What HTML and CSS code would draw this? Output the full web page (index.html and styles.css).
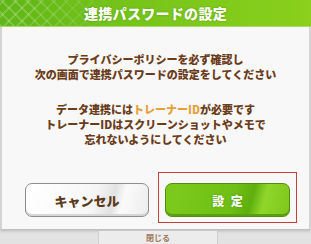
FILE: index.html
```html
<!DOCTYPE html>
<html lang="ja">
<head>
<meta charset="utf-8">
<link rel="stylesheet" href="styles.css">
</head>
<body>
<div class="screen">
  <div class="dialog">
    <div class="header"><span class="title">連携パスワードの設定</span></div>
    <div class="body">
      <p class="para">プライバシーポリシーを必ず確認し<br>次の画面で連携パスワードの設定をしてください</p>
      <p class="para second">データ連携には<span class="hl">トレーナーID</span>が必要です<br>トレーナーIDはスクリーンショットやメモで<br>忘れないようにしてください</p>
      <div class="buttons">
        <button class="btn cancel">キャンセル</button>
        <div class="ok-wrap">
          <button class="btn ok">設&nbsp;定</button>
          <span class="mark"></span>
        </div>
      </div>
    </div>
  </div>
  <div class="under">
    <div class="under-card">閉じる</div>
  </div>
</div>
</body>
</html>
```
FILE: styles.css
```css
html, body {
  margin: 0;
  padding: 0;
}
body {
  width: 311px;
  height: 244px;
  overflow: hidden;
  background: #e2e2e2;
  font-family: "Noto Sans CJK JP", "Noto Sans", sans-serif;
}
.screen {
  display: flex;
  flex-direction: column;
  height: 244px;
}
.dialog {
  display: flex;
  flex-direction: column;
  box-shadow: 0 2px 3px rgba(0,0,0,0.18);
}
.header {
  position: relative;
  height: 26px;
  display: flex;
  align-items: center;
  justify-content: center;
  background: linear-gradient(to right, #5fb616 0%, #76c41a 40%, #8ad01c 100%);
  border-bottom: 1px solid #a8d86a;
  overflow: hidden;
}
.header::before {
  content: "";
  position: absolute;
  left: 0;
  top: 0;
  width: 120px;
  height: 100%;
  background:
    repeating-linear-gradient(45deg, rgba(255,255,255,0.18) 0 2px, transparent 2px 9px),
    repeating-linear-gradient(-45deg, rgba(255,255,255,0.18) 0 2px, transparent 2px 9px);
  -webkit-mask-image: linear-gradient(to right, #000 20%, transparent 100%);
  mask-image: linear-gradient(to right, #000 20%, transparent 100%);
}
.title {
  position: relative;
  color: #ffffff;
  font-weight: 900;
  font-size: 14px;
  line-height: 18px;
  letter-spacing: 0.3px;
  text-shadow: 0 0 2px rgba(60,120,10,0.6);
}
.body {
  background: #f8f8f8;
  border-left: 2px solid #d4d4d4;
  border-right: 2px solid #d4d4d4;
  padding: 25px 0 12px 0;
  display: flex;
  flex-direction: column;
  align-items: center;
}
.para {
  margin: 0;
  text-align: center;
  color: #6a3c1a;
  font-weight: 900;
  font-size: 11px;
  line-height: 15px;
}
.para.second {
  margin-top: 20px;
}
.hl {
  color: #e6a038;
}
.buttons {
  align-self: stretch;
  display: flex;
  gap: 16px;
  padding-left: 23px;
  margin-top: 36px;
}
.btn {
  height: 34px;
  border-radius: 7px;
  font-family: "Noto Sans CJK JP", "Noto Sans", sans-serif;
  font-weight: 900;
  display: flex;
  align-items: center;
  justify-content: center;
  padding: 0;
  margin: 0;
}
.cancel {
  width: 124px;
  background: linear-gradient(105deg, #ffffff 0%, #f6f6f6 55%, #e2e2e2 70%, #fafafa 78%, #ededed 100%);
  border: 1px solid #8c8c8c;
  box-shadow: inset 0 -2px 0 #d6d6d6;
  color: #5c3a1c;
  font-size: 13px;
}
.ok-wrap {
  position: relative;
  display: flex;
}
.ok {
  width: 125px;
  background: linear-gradient(105deg, #7ccb1c 0%, #6fbe14 55%, #5eae0e 68%, #8fd62a 78%, #7cc81a 100%);
  border: 1px solid #4f8f12;
  box-shadow: inset 0 -2px 0 #58a010;
  color: #ffffff;
  font-size: 12px;
  letter-spacing: 2px;
  text-indent: 2px;
  text-shadow: 0 0 2px rgba(50,100,10,0.5);
}
.mark {
  position: absolute;
  left: -7px;
  right: -7px;
  top: -11px;
  bottom: -6px;
  border: 1.5px solid #c8403a;
  pointer-events: none;
}
.under {
  flex: 1;
  display: flex;
  padding-left: 98px;
  margin-top: 2px;
}
.under-card {
  width: 118px;
  border-left: 1px solid #cfcfcf;
  border-right: 1px solid #cfcfcf;
  background: #ececec;
  color: #a07a5a;
  font-size: 8px;
  font-weight: 700;
  text-align: center;
  line-height: 11px;
  padding-top: 1px;
}
```
